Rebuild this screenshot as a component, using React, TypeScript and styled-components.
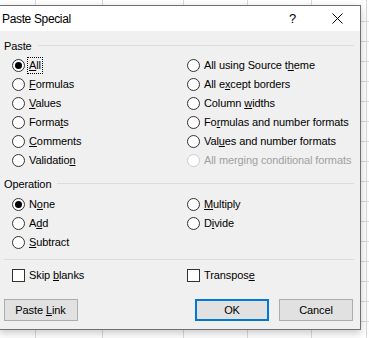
import { Fragment } from 'react';
import styled, { createGlobalStyle } from 'styled-components';

const GlobalStyle = createGlobalStyle`
  html, body {
    margin: 0;
    padding: 0;
  }
  body {
    font-family: 'Liberation Sans', Arial, sans-serif;
    font-size: 11px;
    letter-spacing: -0.1px;
    color: #000;
  }
`;

const GRID = '#dadada';
const vline = (x: number) => `linear-gradient(${GRID}, ${GRID}) ${x}px 0 / 1px 100% no-repeat`;

const Sheet = styled.div`
  width: 369px;
  height: 338px;
  overflow: hidden;
  box-sizing: border-box;
  padding-top: 5px;
  background: ${[35, 102, 183, 247, 311, 366].map(vline).join(', ')},
    repeating-linear-gradient(to bottom, transparent 0 19px, ${GRID} 19px 20px) 0 2px,
    #fff;
`;

const Dialog = styled.div`
  width: 362px;
  height: 325px;
  margin-left: -1px;
  box-sizing: border-box;
  border: 1px solid #707070;
  background: #f0f0f0;
  box-shadow: 0 3px 8px rgba(0, 0, 0, 0.22);
  display: flex;
  flex-direction: column;
`;

const TitleBar = styled.div`
  height: 25px;
  background: #fff;
  display: flex;
  align-items: center;
  padding-left: 2px;
`;

const Title = styled.div`
  flex: 1;
  font-size: 12px;
  letter-spacing: -0.35px;
`;

const TitleButton = styled.div`
  width: 45px;
  height: 25px;
  display: flex;
  align-items: center;
  justify-content: center;
  font-size: 13px;
`;

const Body = styled.div`
  flex: 1;
  display: flex;
  flex-direction: column;
  padding: 7px 6px 8px 4px;
`;

const GroupHeader = styled.div<{ $gap: number }>`
  display: flex;
  align-items: center;
  height: 15px;
  margin-top: ${({ $gap }) => $gap}px;

  &::after {
    content: '';
    flex: 1;
    margin-left: 6px;
    border-top: 1px solid #dcdcdc;
  }
`;

const Options = styled.div<{ $gap: number; $rows?: number }>`
  display: grid;
  grid-template-columns: 175px 1fr;
  grid-template-rows: ${({ $rows }) => ($rows ? `repeat(${$rows}, 19px)` : '19px')};
  grid-auto-rows: 19px;
  grid-auto-flow: column;
  padding-left: 8px;
  margin-top: ${({ $gap }) => $gap}px;
`;

const OptionRow = styled.label<{ $disabled?: boolean }>`
  display: flex;
  align-items: center;
  gap: 4px;
  color: ${({ $disabled }) => ($disabled ? '#a0a0a0' : '#000')};
  white-space: nowrap;
`;

const Radio = styled.span<{ $checked?: boolean; $disabled?: boolean }>`
  width: 13px;
  height: 13px;
  box-sizing: border-box;
  border-radius: 50%;
  border: 1px solid ${({ $disabled }) => ($disabled ? '#cccccc' : '#333')};
  background: #fff;
  display: flex;
  align-items: center;
  justify-content: center;

  &::after {
    content: '';
    width: 7px;
    height: 7px;
    border-radius: 50%;
    background: ${({ $checked }) => ($checked ? '#000' : 'transparent')};
  }
`;

const Checkbox = styled.span`
  width: 13px;
  height: 13px;
  box-sizing: border-box;
  border: 1px solid #333;
  background: #fff;
`;

const Text = styled.span<{ $focused?: boolean }>`
  padding: 0 1px;
  margin-left: -1px;
  line-height: 15px;
  outline: ${({ $focused }) => ($focused ? '1px dotted #000' : 'none')};
`;

const Key = styled.span`
  text-decoration: underline;
`;

const Separator = styled.div`
  margin: 7px 0 0 0;
  border-top: 1px solid #dcdcdc;
`;

const Footer = styled.div`
  display: flex;
  margin-top: auto;
  gap: 10px;
  padding-right: 1px;
`;

const Button = styled.div<{ $default?: boolean }>`
  width: 74px;
  height: 22px;
  box-sizing: border-box;
  display: flex;
  align-items: center;
  justify-content: center;
  background: #e1e1e1;
  border: ${({ $default }) => ($default ? '2px solid #0078d7' : '1px solid #adadad')};

  &:first-child {
    margin-right: auto;
  }
`;

// label text with its access key: [before, key, after]
type Label = [string, string, string];

interface Option {
  label: Label;
  checked?: boolean;
  disabled?: boolean;
  focused?: boolean;
}

const pasteOptions: Option[] = [
  { label: ['', 'A', 'll'], checked: true, focused: true },
  { label: ['', 'F', 'ormulas'] },
  { label: ['', 'V', 'alues'] },
  { label: ['Forma', 't', 's'] },
  { label: ['', 'C', 'omments'] },
  { label: ['Validatio', 'n', ''] },
  { label: ['All using Source t', 'h', 'eme'] },
  { label: ['All e', 'x', 'cept borders'] },
  { label: ['Column ', 'w', 'idths'] },
  { label: ['Fo', 'r', 'mulas and number formats'] },
  { label: ['Val', 'u', 'es and number formats'] },
  { label: ['All merging conditional formats', '', ''], disabled: true },
];

const operationOptions: (Option | null)[] = [
  { label: ['N', 'o', 'ne'], checked: true },
  { label: ['A', 'd', 'd'] },
  { label: ['', 'S', 'ubtract'] },
  { label: ['', 'M', 'ultiply'] },
  { label: ['D', 'i', 'vide'] },
  null,
];

function LabelText({ label, focused }: { label: Label; focused?: boolean }) {
  const [before, key, after] = label;
  return (
    <Text $focused={focused}>
      {before}
      {key && <Key>{key}</Key>}
      {after}
    </Text>
  );
}

function RadioList({ options }: { options: (Option | null)[] }) {
  return (
    <Fragment>
      {options.map((opt, i) =>
        opt ? (
          <OptionRow key={i} $disabled={opt.disabled}>
            <Radio $checked={opt.checked} $disabled={opt.disabled} />
            <LabelText label={opt.label} focused={opt.focused} />
          </OptionRow>
        ) : (
          <span key={i} />
        ),
      )}
    </Fragment>
  );
}

function CloseIcon() {
  return (
    <svg width="11" height="11" viewBox="0 0 11 11">
      <path d="M0.5 0.5 L10.5 10.5 M10.5 0.5 L0.5 10.5" stroke="#000" strokeWidth="1" />
    </svg>
  );
}

export default function App() {
  return (
    <Sheet>
      <GlobalStyle />
      <Dialog>
        <TitleBar>
          <Title>Paste Special</Title>
          <TitleButton>?</TitleButton>
          <TitleButton>
            <CloseIcon />
          </TitleButton>
        </TitleBar>
        <Body>
          <GroupHeader $gap={0}>Paste</GroupHeader>
          <Options $gap={3} $rows={6}>
            <RadioList options={pasteOptions} />
          </Options>
          <GroupHeader $gap={6}>Operation</GroupHeader>
          <Options $gap={4} $rows={3}>
            <RadioList options={operationOptions} />
          </Options>
          <Separator />
          <Options $gap={6}>
            <OptionRow>
              <Checkbox />
              <LabelText label={['Skip ', 'b', 'lanks']} />
            </OptionRow>
            <OptionRow>
              <Checkbox />
              <LabelText label={['Transpos', 'e', '']} />
            </OptionRow>
          </Options>
          <Footer>
            <Button>
              <LabelText label={['Paste ', 'L', 'ink']} />
            </Button>
            <Button $default>OK</Button>
            <Button>Cancel</Button>
          </Footer>
        </Body>
      </Dialog>
    </Sheet>
  );
}
